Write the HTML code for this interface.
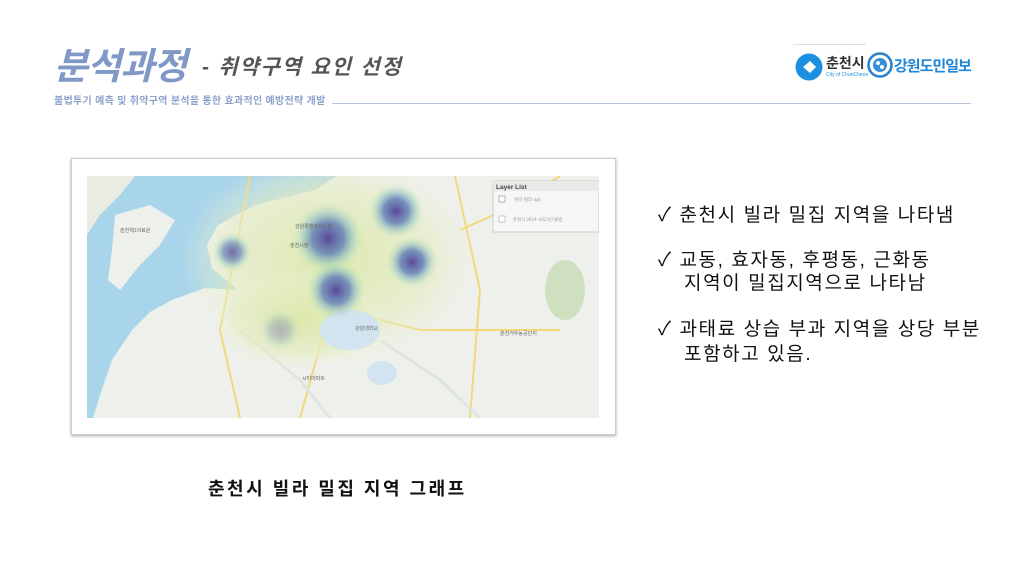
<!DOCTYPE html>
<html><head><meta charset="utf-8">
<style>
*{margin:0;padding:0;box-sizing:border-box}
body{width:1024px;height:576px;background:#fff;position:relative;overflow:hidden;font-family:"Liberation Sans","Noto Sans CJK KR",sans-serif}
.abs{position:absolute;white-space:nowrap}
.t1{left:54px;top:36px;font-size:37px;font-weight:bold;font-style:italic;color:#8098c6;letter-spacing:-1px}
.t2{left:202px;top:51px;font-size:21px;font-weight:bold;font-style:italic;color:#555;letter-spacing:1.8px}
.sub{left:54px;top:92px;font-size:10px;font-weight:bold;color:#8ca2cc;letter-spacing:.3px}
.chk{left:658px;font-size:19px;color:#111;letter-spacing:1.6px}
</style></head><body>
<div class="abs t1">분석과정</div>
<div class="abs t2">- 취약구역 요인 선정</div>
<div class="abs sub">불법투기 예측 및 취약구역 분석을 통한 효과적인 예방전략 개발</div>
<div class="abs" style="left:332px;top:103px;width:639px;height:1px;background:#b8c4dc"></div>
<div class="abs" style="left:793px;top:44px;width:73px;height:1px;background:#ddd"></div>
<svg class="abs" style="left:795px;top:51px" width="30" height="32" viewBox="0 0 30 32"><circle cx="14" cy="16" r="13.5" fill="#1d8fe0"/><path d="M8 16 L15 10 L21 16 L15 22 Z" fill="#fff"/></svg>
<div class="abs" style="left:826px;top:53px;font-size:14px;font-weight:bold;color:#333">춘천시</div>
<div class="abs" style="left:826px;top:72px;font-size:5px;color:#1d8fe0">City of ChunCheon</div>
<svg class="abs" style="left:867px;top:52px" width="26" height="26" viewBox="0 0 26 26"><circle cx="13" cy="13" r="11.5" fill="#fff" stroke="#2a7fd0" stroke-width="2.5"/><circle cx="13" cy="13" r="7" fill="#3a8ed8"/><circle cx="11" cy="11" r="2" fill="#fff"/><circle cx="15" cy="15" r="2" fill="#fff"/></svg>
<div class="abs" style="left:894px;top:55px;font-size:15px;font-weight:bold;color:#1d86d8;letter-spacing:-1px">강원도민일보</div>

<div class="abs" style="left:71px;top:158px;width:545px;height:277px;border:1px solid #ccc;box-shadow:0 1px 3px rgba(0,0,0,.35);background:#fff"></div>
<svg class="abs" style="left:87px;top:176px" width="512" height="242" viewBox="87 176 512 242">
<defs>
<radialGradient id="h"><stop offset="0" stop-color="#5a4a9a"/><stop offset=".45" stop-color="#5d7cb8" stop-opacity=".8"/><stop offset=".75" stop-color="#8fc8c8" stop-opacity=".4"/><stop offset="1" stop-color="#d8e8a0" stop-opacity="0"/></radialGradient>
<radialGradient id="y"><stop offset="0" stop-color="#dce8a8" stop-opacity=".95"/><stop offset=".7" stop-color="#e4ecc0" stop-opacity=".6"/><stop offset="1" stop-color="#eef2d8" stop-opacity="0"/></radialGradient>
</defs>
<rect x="87" y="176" width="512" height="242" fill="#eef0ec"/>
<path d="M87 176 H337 L315 190 L255 205 L218 225 L207 245 L212 268 L238 290 L205 288 L172 300 L150 312 L132 330 L112 360 L100 395 L93 418 H87 Z" fill="#a9d5ea"/>
<path d="M115 215 L150 205 L175 220 L160 245 L140 265 L120 290 L108 280 L112 250 Z" fill="#eef0ec"/>
<path d="M87 176 H135 L120 195 L100 215 L87 235 Z" fill="#e8ece2"/>
<path d="M455 176 L480 290 L470 418 M560 176 L505 210 L460 230 M250 176 L220 330 L240 418 M300 300 L420 330 L560 330 M330 310 L300 418" stroke="#f2d878" stroke-width="2" fill="none"/>
<path d="M240 330 L300 380 L330 418 M380 340 L440 380 L480 418" stroke="#e0e4e0" stroke-width="3" fill="none"/>
<ellipse cx="330" cy="260" rx="150" ry="105" fill="url(#y)"/>
<ellipse cx="300" cy="320" rx="90" ry="50" fill="url(#y)"/>
<ellipse cx="520" cy="205" rx="30" ry="25" fill="url(#y)"/>
<ellipse cx="565" cy="290" rx="20" ry="30" fill="#cfe0c0"/>
<ellipse cx="350" cy="330" rx="30" ry="20" fill="#d2e4f0"/>
<ellipse cx="382" cy="373" rx="15" ry="12" fill="#d2e4f0"/>
<circle cx="396" cy="211" r="28" fill="url(#h)"/>
<circle cx="328" cy="238" r="36" fill="url(#h)"/>
<circle cx="412" cy="262" r="26" fill="url(#h)"/>
<circle cx="336" cy="290" r="30" fill="url(#h)"/>
<circle cx="232" cy="252" r="20" fill="url(#h)" opacity=".8"/>
<circle cx="280" cy="330" r="22" fill="url(#h)" opacity=".35"/>
<g font-size="5" fill="#666" font-family="Liberation Sans,Noto Sans CJK KR,sans-serif"><text x="120" y="232">춘천제1의료원</text><text x="295" y="228">강원특별자치도청</text><text x="290" y="247">춘천시청</text><text x="355" y="330">강원대학교</text><text x="500" y="335">춘천거두농공단지</text><text x="302" y="380">시티아파트</text></g>
<rect x="493" y="181" width="106" height="51" fill="#f6f6f4" stroke="#ccc"/>
<rect x="493" y="181" width="106" height="10" fill="#e8e8e6"/>
<text x="496" y="189" font-size="6.5" font-weight="bold" fill="#444" font-family="Liberation Sans">Layer List</text>
<rect x="499" y="196" width="6" height="6" fill="#fff" stroke="#888" stroke-width=".6"/>
<rect x="499" y="216" width="6" height="6" fill="#fff" stroke="#aaa" stroke-width=".6"/>
<text x="514" y="201" font-size="4.5" fill="#999" font-family="Noto Sans CJK KR">천막-빌라-apt</text>
<text x="513" y="221" font-size="4.5" fill="#999" font-family="Noto Sans CJK KR">춘천시 2014~2023년 불법</text>
</svg>

<div class="abs chk" style="top:200px">✓ 춘천시 빌라 밀집 지역을 나타냄</div>
<div class="abs chk" style="top:245px">✓ 교동, 효자동, 후평동, 근화동</div>
<div class="abs chk" style="top:268px;left:684px">지역이 밀집지역으로 나타남</div>
<div class="abs chk" style="top:314px">✓ 과태료 상습 부과 지역을 상당 부분</div>
<div class="abs chk" style="top:339px;left:684px">포함하고 있음.</div>
<div class="abs" style="left:208px;top:475px;font-size:18px;font-weight:bold;color:#111;letter-spacing:2.5px">춘천시 빌라 밀집 지역 그래프</div>
</body></html>
